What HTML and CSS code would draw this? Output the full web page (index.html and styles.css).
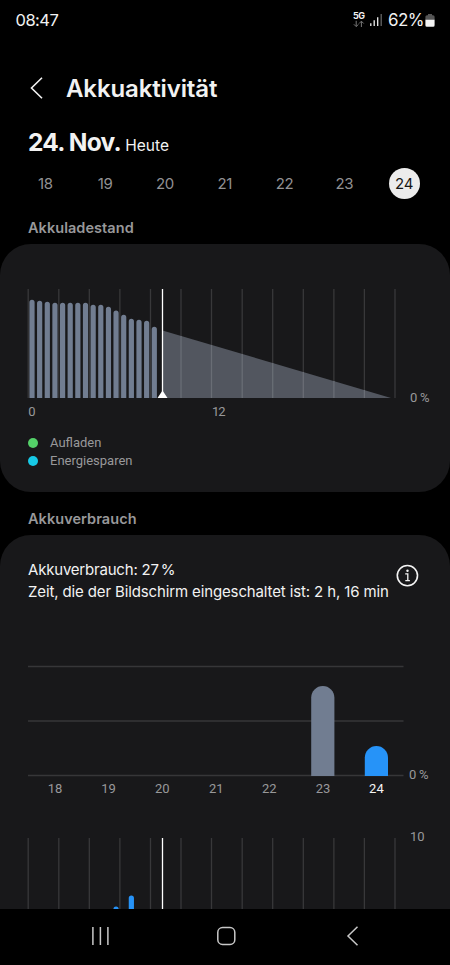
FILE: index.html
```html
<!DOCTYPE html>
<html lang="de">
<head>
<meta charset="utf-8">
<meta name="viewport" content="width=device-width, initial-scale=1">
<title>Akkuaktivität</title>
<link rel="stylesheet" href="styles.css">
</head>
<body>
<div class="phone">
  <header class="status">
    <span class="clock">08:47</span>
    <div class="status-right">
      <div class="network"><span class="network-name">5G</span>
        <svg width="12" height="8" viewBox="0 0 12 8" fill="none" stroke="#777" stroke-width="1"><path d="M3.2 .8v5.6M.9 4.3l2.3 2.3 2.3-2.3M8.4 7V1.3M6.1 3.5l2.3-2.3 2.3 2.3"/></svg>
      </div>
      <svg class="signal" width="12" height="12" viewBox="0 0 12 12" stroke-width="1.3"><path d="M.8 12V9.3M4.2 12V6.3M7.7 12V3.2" stroke="#eee"/><path d="M11.2 12V0" stroke="#666"/></svg>
      <span class="percent">62%</span>
      <svg class="battery" width="10" height="13" viewBox="0 0 10 13"><path d="M3 0h4v1.2h1a1.6 1.6 0 0 1 1.6 1.6V6H.4V2.800A1.600 1.600 0 0 1 2 1.200h1z" fill="#555"/><path d="M.4 5.800h9.200v5.400a1.500 1.500 0 0 1-1.500 1.500H1.900A1.500 1.500 0 0 1 .4 11.200z" fill="#f4f4f4"/></svg>
    </div>
  </header>

  <div class="titlebar">
    <svg width="14" height="22" viewBox="0 0 14 22" fill="none" stroke="#f2f2f2" stroke-width="1.6"><path d="M12 .8L1.500 11 12 21.200"/></svg>
    <h1>Akkuaktivität</h1>
  </div>

  <div class="date"><span class="date-main">24. Nov.</span><span class="date-today">Heute</span></div>

  <nav class="days">
    <span>18</span><span>19</span><span>20</span><span>21</span><span>22</span><span>23</span><span class="selected">24</span>
  </nav>

  <h2 class="heading-level">Akkuladestand</h2>
  <section class="card card-level">
    <svg class="chart" width="450" height="140" viewBox="0 285 450 140">
      <path class="grid" d="M28.200 289V398M58.800 289V398M89.300 289V398M119.900 289V398M150.500 289V398M181 289V398M211.500 289V398M242.200 289V398M272.700 289V398M303.300 289V398M333.900 289V398M364.400 289V398M395 289V398"/>
      <path class="forecast" d="M162.500 330.500L391 397.900H162.500z"/>
      <path class="forecast-grid" d="M181 336V398M211.500 345V398M242.200 354V398M272.700 363V398M303.300 372V398M333.900 381V398M364.400 390V398"/>
      <g class="level-bars">
        <path d="M29.400 398V302.400a2.600 2.600 0 0 1 5.200 0V398zM37.050 398V303.300a2.600 2.600 0 0 1 5.200 0V398zM44.700 398V304.300a2.600 2.600 0 0 1 5.200 0V398zM52.350 398V305.300a2.600 2.600 0 0 1 5.200 0V398zM60 398V305.300a2.600 2.600 0 0 1 5.200 0V398zM67.600 398V305.300a2.600 2.600 0 0 1 5.200 0V398zM75.250 398V305.300a2.600 2.600 0 0 1 5.200 0V398zM82.900 398V305.300a2.600 2.600 0 0 1 5.200 0V398zM90.550 398V307.300a2.600 2.600 0 0 1 5.200 0V398zM98.200 398V307.300a2.600 2.600 0 0 1 5.200 0V398zM105.850 398V309.400a2.600 2.600 0 0 1 5.200 0V398zM113.450 398V313.200a2.600 2.600 0 0 1 5.200 0V398zM121.100 398V317.400a2.600 2.600 0 0 1 5.200 0V398zM128.750 398V321.400a2.600 2.600 0 0 1 5.200 0V398zM136.400 398V322.400a2.600 2.600 0 0 1 5.200 0V398zM144.050 398V323.400a2.600 2.600 0 0 1 5.200 0V398zM151.700 398V329.400a2.600 2.600 0 0 1 5.200 0V398z"/>
      </g>
      <path class="now" d="M162.500 289V397"/>
      <path d="M157.500 398L162.500 390.500 167.500 398z" fill="#fff"/>
      <text x="28.300" y="416.400">0</text>
      <text x="212" y="416.400" textLength="13.500">12</text>
      <text x="410" y="401.700" textLength="19.500">0 %</text>
    </svg>
    <ul class="legend">
      <li><i class="dot green"></i>Aufladen</li>
      <li><i class="dot cyan"></i>Energiesparen</li>
    </ul>
  </section>

  <h2 class="heading-usage">Akkuverbrauch</h2>
  <section class="card card-usage">
    <div class="summary">
      <div class="summary-text">
        <p class="usage">Akkuverbrauch: 27<span class="thin">%</span></p>
        <p class="screen">Zeit, die der Bildschirm eingeschaltet ist: 2 h, 16 min</p>
      </div>
      <svg class="info" width="24" height="24" viewBox="0 0 24 24" fill="none" stroke="#f4f4f4"><circle cx="12.400" cy="11.600" r="10.100" stroke-width="1.600"/><path d="M10.200 9.900h2.600v6.700M10.300 16.600h4.600" stroke-width="1.300"/><circle cx="12.500" cy="6.800" r="1.200" fill="#f4f4f4" stroke="none"/></svg>
    </div>
    <svg class="chart" width="450" height="259" viewBox="0 650 450 259">
      <path class="axis" d="M28 666.500H403.500M28 721H403.500M28 775.500H403.500"/>
      <path d="M311.200 776V697.600a11.600 11.600 0 0 1 23.200 0V776z" fill="#717d91"/>
      <path d="M364.800 776V757.600a11.600 11.600 0 0 1 23.200 0V776z" fill="#2693f8"/>
      <text x="409" y="779.300" textLength="19.500">0 %</text>
      <g text-anchor="middle">
        <text x="55" y="793.400">18</text><text x="108.500" y="793.400">19</text><text x="162.200" y="793.400">20</text><text x="216.300" y="793.400">21</text><text x="269.300" y="793.400">22</text><text x="323" y="793.400">23</text><text class="current" x="376.400" y="793.400">24</text>
      </g>
      <path class="grid" d="M28.200 838V909M58.800 838V909M89.300 838V909M119.900 838V909M150.500 838V909M181 838V909M211.500 838V909M242.200 838V909M272.700 838V909M303.300 838V909M333.900 838V909M364.400 838V909M395 838V909"/>
      <path d="M113.450 909a2.600 2.600 0 0 1 5.200 0zM128.750 909V898a2.600 2.600 0 0 1 5.200 0V909z" fill="#2693f8"/>
      <path class="now" d="M162.500 838V909"/>
      <text x="410" y="841.300">10</text>
    </svg>
  </section>

  <footer class="navbar">
    <svg width="450" height="56" viewBox="0 909 450 56" fill="none" stroke="#c8c8c8" stroke-width="1.500"><path d="M92.900 927v18M100.400 927v18M107.900 927v18"/><rect x="217.800" y="927.500" width="17" height="17" rx="4.800"/><path d="M357.500 926.800L348 936l9.500 9.200"/></svg>
  </footer>
</div>
</body>
</html>
```
FILE: styles.css
```css
* { box-sizing: border-box; }

body {
  margin: 0;
  background: #000;
  color: #f2f2f2;
  font-family: Inter, Roboto, sans-serif;
}

h1, h2, p, ul { margin: 0; padding: 0; }
svg { display: block; flex: none; }

.phone {
  width: 450px;
  height: 965px;
  overflow: hidden;
  display: flex;
  flex-direction: column;
}

.status {
  height: 40px;
  flex: none;
  padding: 0 15px;
  display: flex;
  align-items: center;
  justify-content: space-between;
}
.clock { font-size: 16.500px; letter-spacing: -0.500px; padding-left: 0.500px; }
.status-right { display: flex; align-items: center; }
.network { width: 12px; margin-right: 5px; }
.network-name { display: block; font-size: 9px; line-height: 8px; font-weight: 700; letter-spacing: -0.500px; }
.signal { margin-right: 6px; }
.percent { font-size: 17px; letter-spacing: -0.600px; width: 36px; }
.battery { margin-left: 1px; }

.titlebar {
  height: 48px;
  flex: none;
  margin-top: 25px;
  padding-left: 30px;
  display: flex;
  align-items: center;
  gap: 22px;
}
.titlebar svg { margin-top: -3px; }
h1 { font-size: 24px; line-height: 30px; font-weight: 600; letter-spacing: -0.120px; }

.date {
  height: 38px;
  flex: none;
  margin-top: 10px;
  padding-left: 28px;
  line-height: 38px;
  display: flex;
  align-items: baseline;
  gap: 4.500px;
  white-space: nowrap;
}
.date-main { font-size: 24.500px; font-weight: 700; letter-spacing: -0.800px; }
.date-today { font-size: 15.500px; }

.days {
  height: 32px;
  flex: none;
  margin-top: 6px;
  padding: 0 16px 0 15.500px;
  display: grid;
  grid-template-columns: repeat(7, 1fr);
  place-items: center;
  font-size: 15px;
  letter-spacing: -0.300px;
  color: #919193;
}
.days .selected {
  width: 31px;
  height: 31px;
  border-radius: 50%;
  background: #ececec;
  color: #161616;
  line-height: 31px;
  text-align: center;
}

h2 {
  flex: none;
  padding-left: 28px;
  font-size: 14.500px;
  line-height: 20px;
  font-weight: 600;
  letter-spacing: 0.050px;
  color: #98989a;
}
.heading-level { margin-top: 19px; height: 26px; }
.heading-usage { margin-top: 17px; height: 26px; }

.card { background: #18181a; flex: none; }
.card-level { height: 248px; border-radius: 31px; padding-top: 41px; }
.card-usage { height: 374px; border-radius: 31px 31px 0 0; }

.chart text { font: 13px Roboto, sans-serif; fill: #98989a; }
.chart .current { fill: #f4f4f4; }
.grid { fill: none; stroke: #38383a; stroke-width: 1.300; }
.axis { fill: none; stroke: #363638; stroke-width: 1.300; }
.forecast { fill: #52565f; }
.forecast-grid { fill: none; stroke: #696d75; stroke-width: 1.300; }
.level-bars { fill: #717d91; }
.now { fill: none; stroke: #fff; stroke-width: 1.300; }

.legend {
  list-style: none;
  margin-top: 9px;
  padding-left: 28px;
  font: 13px/18px Roboto, sans-serif;
  color: #98989a;
}
.legend li { display: flex; align-items: center; }
.dot { width: 10px; height: 10px; border-radius: 50%; margin-right: 12px; }
.green { background: #54d169; }
.cyan { background: #17c9e6; }

.summary {
  height: 115px;
  padding: 24px 0 0 28px;
  display: flex;
}
.summary-text {
  width: 367px;
  font-size: 15px;
  line-height: 22px;
  white-space: nowrap;
}
.usage { letter-spacing: -0.200px; }
.thin { margin-left: 2px; }
.screen { letter-spacing: -0.130px; }
.info { margin-top: 5px; }

.navbar { height: 56px; flex: none; background: #000; }
```
